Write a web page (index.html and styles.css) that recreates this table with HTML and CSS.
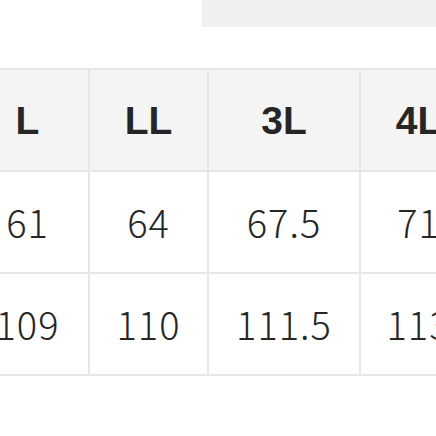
FILE: index.html
```html
<!DOCTYPE html>
<html lang="ja">
<head>
<meta charset="utf-8">
<link rel="stylesheet" href="styles.css">
</head>
<body>
<div class="page">
  <div class="topbar"><div class="tab"></div></div>
  <table class="sizes">
    <colgroup>
      <col class="c0"><col class="c1"><col class="c2"><col class="c3">
    </colgroup>
    <thead>
      <tr><th>L</th><th>LL</th><th>3L</th><th>4L</th></tr>
    </thead>
    <tbody>
      <tr><td>61</td><td>64</td><td>67.5</td><td>71</td></tr>
      <tr><td>109</td><td>110</td><td>111.5</td><td>113</td></tr>
    </tbody>
  </table>
</div>
</body>
</html>
```
FILE: styles.css
```css
html, body {
  margin: 0;
  padding: 0;
  background: #ffffff;
  overflow: hidden;
}
.page {
  width: 436px;
  height: 436px;
  overflow: hidden;
}
.topbar {
  display: flex;
  justify-content: flex-end;
  height: 27px;
}
.tab {
  width: 234px;
  height: 27px;
  background: #f0f0ee;
}
.sizes {
  margin-top: 41px;
  margin-left: -35px;
  border-collapse: collapse;
  table-layout: fixed;
  width: 511px;
  color: #262626;
}
.c0 { width: 123px; }
.c1 { width: 119px; }
.c2 { width: 152px; }
.c3 { width: 117px; }
.sizes th,
.sizes td {
  border: 2px solid #e6e6e6;
  height: 100px;
  padding: 0;
  text-align: center;
  vertical-align: middle;
  line-height: 1;
}
.sizes th {
  background: #f4f4f4;
  font-family: "Liberation Sans", Arial, sans-serif;
  font-weight: 700;
  font-size: 39px;
}
.sizes td {
  font-family: "Noto Sans CJK JP", "Noto Sans", sans-serif;
  font-weight: 300;
  font-size: 38px;
  letter-spacing: 1px;
}
```
